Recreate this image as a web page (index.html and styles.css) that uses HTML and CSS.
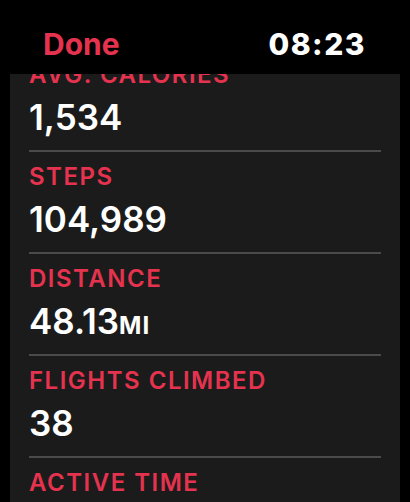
FILE: index.html
```html
<!DOCTYPE html>
<html lang="en">
<head>
    <meta charset="UTF-8">
    <meta name="viewport" content="width=device-width, initial-scale=1.0">
    <title>Activity Summary</title>
    <link rel="stylesheet" href="styles.css">
</head>
<body>
    <div class="top-bar">
        <span class="done-btn">Done</span>
        <span class="clock">08:23</span>
    </div>

    <div class="summary-card">
        <div class="stat-list">
            <div class="stat-row">
                <div class="stat-label">AVG. CALORIES</div>
                <div class="stat-value">1,534</div>
            </div>
            <div class="stat-row">
                <div class="stat-label">STEPS</div>
                <div class="stat-value">104,989</div>
            </div>
            <div class="stat-row">
                <div class="stat-label">DISTANCE</div>
                <div class="stat-value">48.13<span class="unit">MI</span></div>
            </div>
            <div class="stat-row">
                <div class="stat-label">FLIGHTS CLIMBED</div>
                <div class="stat-value">38</div>
            </div>
            <div class="stat-row">
                <div class="stat-label">ACTIVE TIME</div>
                <div class="stat-value">9:42:10</div>
            </div>
        </div>
    </div>
</body>
</html>
```

FILE: styles.css
```css
body {
    margin: 0;
    background: #000;
    color: #fff;
    font-family: Inter, "Noto Sans", sans-serif;
    height: 502px;
    overflow: hidden;
}

.top-bar {
    display: flex;
    justify-content: space-between;
    height: 74px;
    box-sizing: border-box;
    padding: 26px 44px 0 43px;
    font-size: 30px;
    line-height: 36px;
    font-weight: 700;
}

.done-btn {
    color: #e5334f;
}

.clock {
    font-weight: 800;
    letter-spacing: 1.5px;
}

/* the card is scrolled a bit, so its top is hidden under the bar */
.summary-card {
    margin: 0 10px;
    height: 428px;
    background: #1b1b1b;
    overflow: hidden;
}

.stat-list {
    margin-top: -24px;
    padding: 0 19px;
}

.stat-row {
    padding: 11px 0 13px;
    border-top: 2px solid #4a4a4a;
}

.stat-row:first-child {
    border-top: none;
}

.stat-label {
    color: #e5334f;
    font-size: 24px;
    line-height: 28px;
    font-weight: 600;
    letter-spacing: 1.5px;
    margin-bottom: 8px;
}

.stat-value {
    font-size: 35px;
    line-height: 40px;
    font-weight: 600;
}

.unit {
    font-size: 24px;
    line-height: 1;
    font-weight: 700;
    letter-spacing: 1px;
}
```
